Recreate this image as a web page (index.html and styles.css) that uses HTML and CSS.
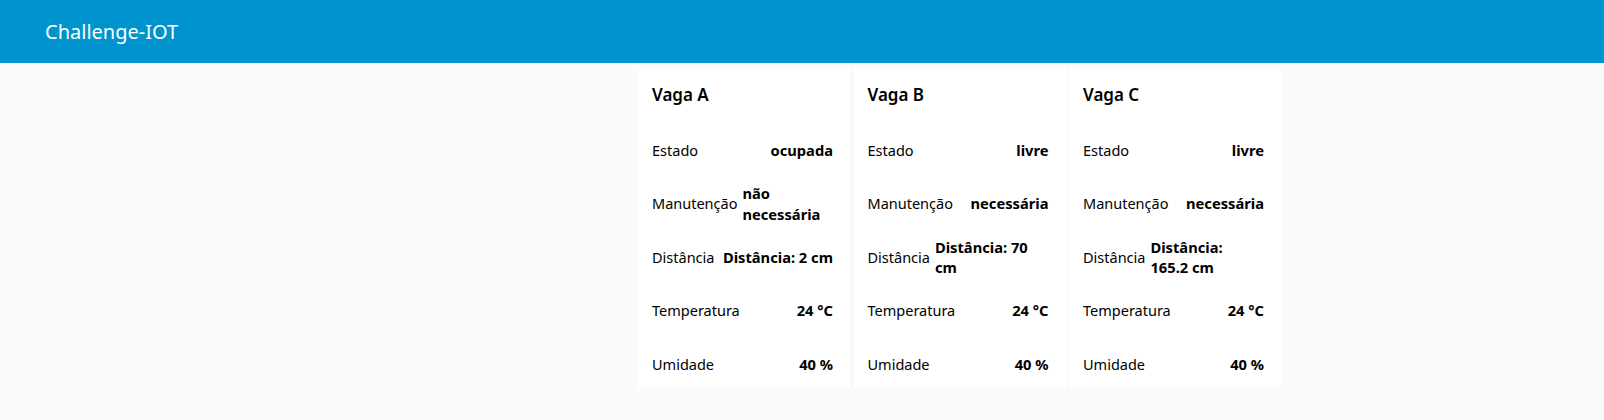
FILE: index.html
```html
<!DOCTYPE html>
<html lang="pt">
<head>
<meta charset="utf-8">
<title>Challenge-IOT</title>
<link rel="stylesheet" href="styles.css">
</head>
<body>
<header class="toolbar"><h1 class="app-title">Challenge-IOT</h1></header>
<main class="content">
  <section class="card">
    <h2 class="card-title">Vaga A</h2>
    <div class="row"><span class="label">Estado</span><span class="value">ocupada</span></div>
    <div class="row"><span class="label">Manutenção</span><span class="value">não necessária</span></div>
    <div class="row"><span class="label">Distância</span><span class="value">Distância: 2 cm</span></div>
    <div class="row"><span class="label">Temperatura</span><span class="value">24 °C</span></div>
    <div class="row"><span class="label">Umidade</span><span class="value">40 %</span></div>
  </section>
  <section class="card">
    <h2 class="card-title">Vaga B</h2>
    <div class="row"><span class="label">Estado</span><span class="value">livre</span></div>
    <div class="row"><span class="label">Manutenção</span><span class="value">necessária</span></div>
    <div class="row"><span class="label">Distância</span><span class="value">Distância: 70 cm</span></div>
    <div class="row"><span class="label">Temperatura</span><span class="value">24 °C</span></div>
    <div class="row"><span class="label">Umidade</span><span class="value">40 %</span></div>
  </section>
  <section class="card">
    <h2 class="card-title">Vaga C</h2>
    <div class="row"><span class="label">Estado</span><span class="value">livre</span></div>
    <div class="row"><span class="label">Manutenção</span><span class="value">necessária</span></div>
    <div class="row"><span class="label">Distância</span><span class="value">Distância: 165.2 cm</span></div>
    <div class="row"><span class="label">Temperatura</span><span class="value">24 °C</span></div>
    <div class="row"><span class="label">Umidade</span><span class="value">40 %</span></div>
  </section>
</main>
</body>
</html>
```
FILE: styles.css
```css
html, body {
  margin: 0;
  padding: 0;
}
body {
  background: #fafafa;
  font-family: "Noto Sans", "Open Sans", sans-serif;
  color: #000;
  height: 420px;
  overflow: hidden;
}
.toolbar {
  height: 63px;
  background: #0094ce;
  display: flex;
  align-items: center;
  padding-left: 45px;
  box-sizing: border-box;
}
.app-title {
  margin: 0;
  font-size: 20px;
  font-weight: 400;
  color: #fff;
}
.content {
  display: flex;
  gap: 3.5px;
  padding: 6px 0 0 638px;
}
.card {
  width: 212px;
  background: #fff;
  padding: 0 17px 0 14px;
  box-sizing: border-box;
  display: flex;
  flex-direction: column;
  gap: 5.5px;
}
.card-title {
  margin: 0 0 1.5px;
  height: 50px;
  display: flex;
  align-items: center;
  font-size: 17px;
  font-weight: 600;
}
.row {
  height: 48px;
  display: flex;
  align-items: center;
  justify-content: space-between;
  gap: 5px;
  font-size: 14.5px;
  line-height: 20.5px;
}
.label {
  white-space: nowrap;
}
.value {
  font-weight: 700;
  font-size: 14.7px;
  text-align: left;
}
```
